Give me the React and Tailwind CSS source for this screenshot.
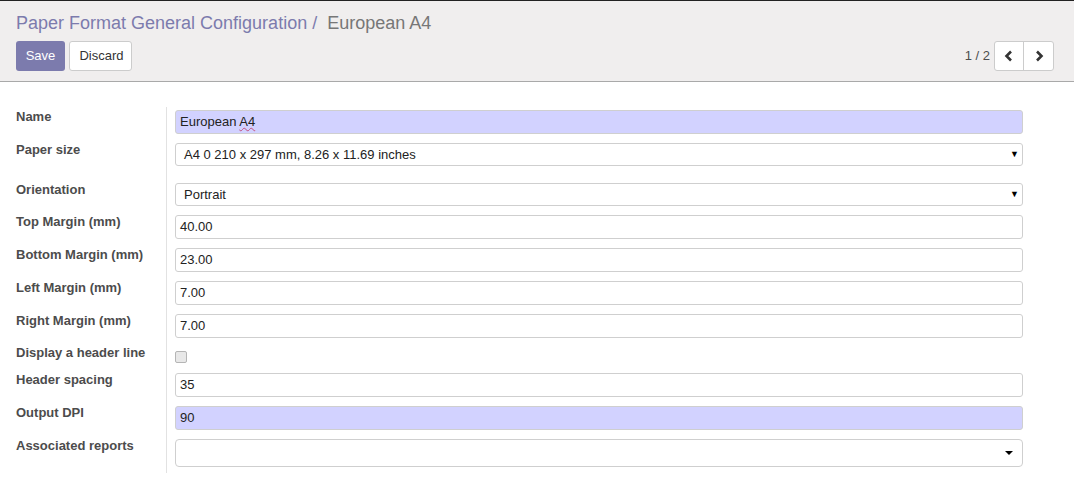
import React from "react";

const font = { fontFamily: '"Liberation Sans", Arial, sans-serif' };

const Chevron = ({ dir }) => (
  <svg width="10" height="12" viewBox="0 0 10 12">
    <path
      d={dir === "left" ? "M7 1.5 L2.5 6 L7 10.5" : "M3 1.5 L7.5 6 L3 10.5"}
      fill="none"
      stroke="#333"
      strokeWidth="2.6"
    />
  </svg>
);

const Row = ({ label, h, children }) => (
  <div className="flex" style={{ height: h }}>
    <div className="w-[166px] shrink-0 pl-4 text-[13px] font-bold leading-5 text-[#4c4c4c]">
      {label}
    </div>
    <div className="flex-1 border-l border-[#e2e2e2] pl-2 pr-[51px] pt-[3px]">
      {children}
    </div>
  </div>
);

const TextInput = ({ value, required }) => (
  <div
    className={
      "h-6 rounded-[3px] border border-[#cfcfcf] px-[4px] text-[13px] leading-[22px] text-[#222] " +
      (required ? "bg-[#d2d2ff]" : "bg-white")
    }
  >
    {value}
  </div>
);

const SelectInput = ({ value }) => (
  <div className="flex h-[23px] items-center justify-between rounded-[3px] border border-[#cfcfcf] bg-white pl-2 pr-[3px] text-[13px] text-[#222]">
    <span>{value}</span>
    <span className="text-[9px] text-black">▼</span>
  </div>
);

export default function App() {
  return (
    <div className="min-h-[500px] bg-white" style={font}>
      {/* control panel */}
      <div className="h-[82px] border-t border-b border-t-[#222] border-b-[#a9a9a9] bg-[#f0eeee] px-4">
        <div className="pt-[10px] text-[18px] leading-6">
          <span className="text-[#7c7bad]">Paper Format General Configuration / </span>
          <span className="ml-[5px] text-[#777]">European A4</span>
        </div>
        <div className="mt-[6px] flex items-center justify-between pr-1">
          <div className="flex gap-1">
            <button className="h-[30px] w-[49px] rounded-[3px] bg-[#7c7bad] text-[13px] text-white">
              Save
            </button>
            <button className="h-[30px] w-[63px] rounded-[3px] border border-[#cccccc] bg-white pl-[2px] text-[13px] text-[#333]">
              Discard
            </button>
          </div>
          <div className="flex items-center gap-1">
            <span className="text-[13px] text-[#4c4c4c]">1 / 2</span>
            <div className="flex h-[30px] overflow-hidden rounded-[3px] border border-[#cccccc] bg-white">
              <button className="flex w-[29px] items-center justify-center border-r border-[#cccccc]">
                <Chevron dir="left" />
              </button>
              <button className="flex w-[29px] items-center justify-center">
                <Chevron dir="right" />
              </button>
            </div>
          </div>
        </div>
      </div>

      {/* form */}
      <div className="mt-[25px]">
        <Row label="Name" h={33}>
          <TextInput
            required
            value={
              <>
                European{" "}
                <span className="underline decoration-[#c05080] decoration-wavy decoration-1">A4</span>
              </>
            }
          />
        </Row>
        <Row label="Paper size" h={40}>
          <SelectInput value="A4 0 210 x 297 mm, 8.26 x 11.69 inches" />
        </Row>
        <Row label="Orientation" h={32}>
          <SelectInput value="Portrait" />
        </Row>
        <Row label="Top Margin (mm)" h={33}>
          <TextInput value="40.00" />
        </Row>
        <Row label="Bottom Margin (mm)" h={33}>
          <TextInput value="23.00" />
        </Row>
        <Row label="Left Margin (mm)" h={33}>
          <TextInput value="7.00" />
        </Row>
        <Row label="Right Margin (mm)" h={32}>
          <TextInput value="7.00" />
        </Row>
        <Row label="Display a header line" h={27}>
          <div className="mt-[5px] h-3 w-3 rounded-[2px] border border-[#b5b5b5] bg-[#e8e8e8]" />
        </Row>
        <Row label="Header spacing" h={33}>
          <TextInput value="35" />
        </Row>
        <Row label="Output DPI" h={33}>
          <TextInput required value="90" />
        </Row>
        <Row label="Associated reports" h={37}>
          <div className="flex h-[28px] items-center justify-end rounded-[4px] border border-[#cfcfcf] bg-white pr-[9px]">
            <span className="h-0 w-0 border-x-[4px] border-t-[4px] border-x-transparent border-t-black" />
          </div>
        </Row>
      </div>
    </div>
  );
}
